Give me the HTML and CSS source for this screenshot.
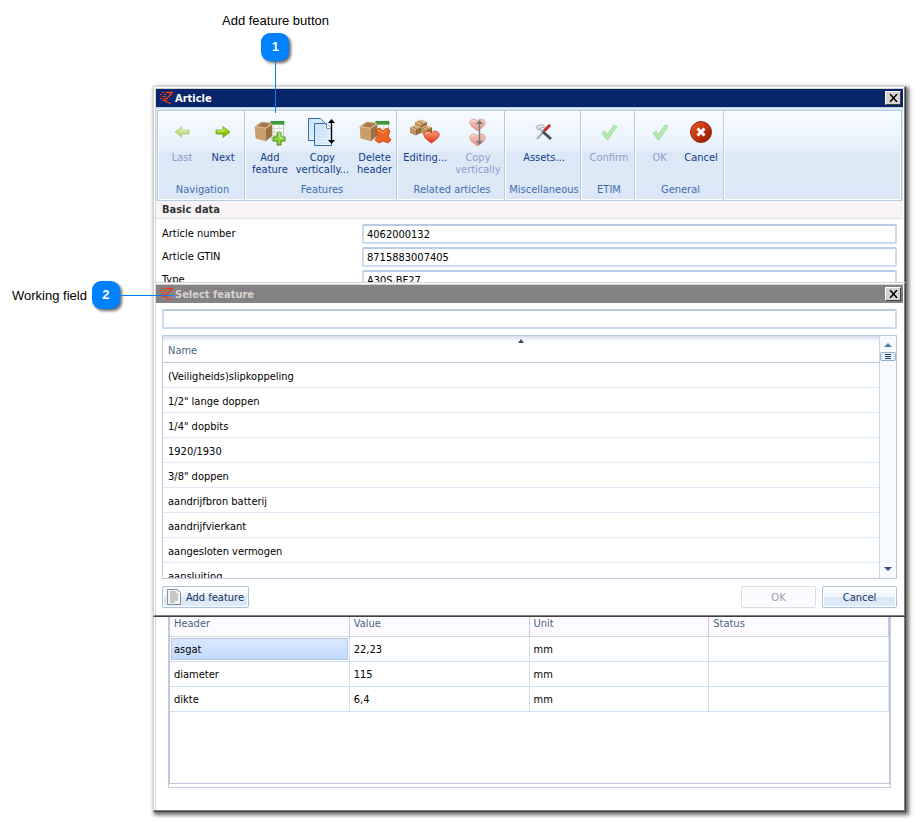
FILE: index.html
```html
<!DOCTYPE html>
<html lang="en">
<head>
<meta charset="utf-8">
<title>Article</title>
<link rel="stylesheet" href="styles.css">
</head>
<body>
<svg class="defs" width="0" height="0" aria-hidden="true">
  <defs>
    <linearGradient id="green" x1="0" y1="0" x2="0" y2="1"><stop offset="0" stop-color="#b4e61e"/><stop offset="1" stop-color="#6fae00"/></linearGradient>
    <linearGradient id="heartfill" x1="0" y1="0" x2="0" y2="1"><stop offset="0" stop-color="#ff9a78"/><stop offset="1" stop-color="#dc3214"/></linearGradient>
    <linearGradient id="redball" x1="0" y1="0" x2="1" y2="1"><stop offset="0" stop-color="#f05a1e"/><stop offset="1" stop-color="#8c1400"/></linearGradient>
    <linearGradient id="pagefill" x1="0" y1="0" x2="1" y2="1"><stop offset="0" stop-color="#c8e0fa"/><stop offset="1" stop-color="#f4faff"/></linearGradient>
    <symbol id="logo" viewBox="0 0 13 14">
      <path d="M6 1.500h6.500L6.500 8l-2 1.500L11 13" fill="none" stroke="#f03c14" stroke-width="1.400"/>
      <path d="M2 1.500h3M0 3.500h2M4 3.500h2M1 5.500h1M3 5.500h3M0 7.500h2M3 7.500h2M2 9.500h2" stroke="#f03c14"/>
    </symbol>
    <symbol id="arrow" viewBox="0 0 16 14">
      <path d="M1 5h7V1.500L15 7l-7 5.500V9H1z" fill="url(#green)" stroke="#6fa51e" stroke-width=".8"/>
      <path d="M2 6h7V4" fill="none" stroke="#dcf58c"/>
    </symbol>
    <symbol id="box" viewBox="0 0 32 28">
      <path d="M18 2h13v20H18z" fill="#fff" stroke="#b4c8b4"/>
      <path d="M17 1h15v4H17z" fill="#3c963c"/>
      <path d="M21 5v16M26 5v16M18 9h13M18 13h13M18 17h13" stroke="#c3d7c3" fill="none"/>
      <path d="M0 7l7-5 12 1-7 6z" fill="#c8a06e"/>
      <path d="M3 7l5-4 9 1-5 4z" fill="#a47a4c"/>
      <path d="M0 7l12 2v14L1 20z" fill="#c89f6b"/>
      <path d="M12 9l7-5v13l-7 6z" fill="#9b7141"/>
      <path d="M0 7l12 2 7-5" fill="none" stroke="#e1c08f"/>
    </symbol>
    <symbol id="cube" viewBox="0 0 14 13">
      <path d="M1 3l6-2.500L13 3 7 6z" fill="#d7b27c"/><path d="M4 2.500l5 2.500v2" fill="none" stroke="#a57b43"/>
      <path d="M1 3l6 3v6L1 9z" fill="#bb9258"/><path d="M13 3L7 6v6l6-3z" fill="#8f693a"/>
    </symbol>
    <symbol id="heart" viewBox="0 0 17 14">
      <path d="M8.500 13C5 10.500.8 7.700.8 4.500.8 1 6.500-.2 8.500 3c2-3.200 7.700-2 7.700 1.500C16.200 7.700 12 10.500 8.500 13z" fill="url(#heartfill)" stroke="#c8371e" stroke-width=".8"/>
      <path d="M2.500 4c.5-1.600 2.500-2 4-.8" fill="none" stroke="#ffd2be"/>
    </symbol>
    <symbol id="check" viewBox="0 0 18 18">
      <path d="M2 10l3-2 2.500 3.500L14 2l3 1.500L8 16.500H6.500z" fill="#78e05a" stroke="#5ac850"/>
    </symbol>
  </defs>
</svg>

<main class="stage">
  <section class="window" aria-label="Article">
    <header class="titlebar">
      <svg class="logo"><use href="#logo"/></svg>
      <h1>Article</h1>
      <button class="close" type="button" aria-label="Close"><svg width="9" height="8" viewBox="0 0 9 8"><path d="M1 0l7 8M8 0L1 8" stroke="#000" stroke-width="1.500"/></svg></button>
    </header>

    <div class="ribbon"><div class="ribbon-inner">
      <div class="group nav">
        <div class="tools">
          <button class="tool" type="button" disabled><span class="icon"><svg class="flip" width="16" height="14"><use href="#arrow"/></svg></span>Last</button>
          <button class="tool" type="button"><span class="icon"><svg width="16" height="14"><use href="#arrow"/></svg></span>Next</button>
        </div>
        <span class="caption">Navigation</span>
      </div>
      <div class="group features">
        <div class="tools">
          <button class="tool" type="button"><span class="icon"><svg width="34" height="30" viewBox="0 0 34 30"><use href="#box" x="0" y="3" width="33" height="26"/><path d="M21 15h4v4h4v4h-4v4h-4v-4h-4v-4h4z" transform="translate(3 1)" fill="#8cd23c" stroke="#418c1e"/><path d="M25 17h2v4h4" fill="none" stroke="#d2f5a0"/></svg></span>Add<br>feature</button>
          <button class="tool" type="button"><span class="icon"><svg width="30" height="30" viewBox="0 0 30 30"><path d="M1.500 1.500h12l4 4v18h-16z" fill="url(#pagefill)" stroke="#326eaf"/><path d="M7.500 6.500h12l5 5v17h-17z" fill="url(#pagefill)" stroke="#326eaf"/><path d="M19.500 6.500v5h5" fill="#fff" stroke="#6496c8"/><path d="M10 11h7M10 14h12M10 17h12M10 20h12M10 23h12M10 26h12" stroke="#c3dcf5"/><path d="M24.500 4v21" stroke="#000" stroke-width="1.400"/><path d="M21 6l3.500-4L28 6zM21 23l3.500 4 3.500-4z"/></svg></span>Copy<br>vertically...</button>
          <button class="tool" type="button"><span class="icon"><svg width="34" height="30" viewBox="0 0 34 30"><use href="#box" x="0" y="3" width="33" height="26"/><path d="M18 14l3-3 4 3 4-3 3 3-2 5 3 4-3 3-5-2-4 2-4-3 3-4z" fill="#f06423" stroke="#d2500f"/><path d="M20 13l5 3 4-3" fill="none" stroke="#ffaa78"/></svg></span>Delete<br>header</button>
        </div>
        <span class="caption">Features</span>
      </div>
      <div class="group related">
        <div class="tools">
          <button class="tool" type="button"><span class="icon"><svg width="32" height="28" viewBox="0 0 32 28"><use href="#cube" x="5" y="1" width="14" height="13"/><use href="#cube" x="0" y="6" width="13" height="13"/><use href="#cube" x="11" y="6" width="13" height="13"/><use href="#heart" x="14" y="12" width="17" height="14"/></svg></span>Editing...</button>
          <button class="tool" type="button" disabled><span class="icon"><svg width="20" height="30" viewBox="0 0 20 30"><use href="#heart" x="1" y="1" width="17" height="14"/><use href="#heart" x="1" y="16" width="17" height="14"/><path d="M11.500 5v20" stroke="#000" stroke-width="1.400"/><path d="M8 7l3.500-4L15 7zM8 24l3.500 4 3.500-4z"/></svg></span>Copy<br>vertically</button>
        </div>
        <span class="caption">Related articles</span>
      </div>
      <div class="group misc">
        <div class="tools">
          <button class="tool" type="button"><span class="icon"><svg width="18" height="18" viewBox="0 0 18 18"><path d="M2 16l9-10" stroke="#aaafb4" stroke-width="2"/><path d="M1 4l3-2h4l2 2-4 1-3 2zM10 7l6-6" fill="#e6e6eb" stroke="#9ba0a5" stroke-width=".8"/><path d="M7 8l9 8" stroke="#46505a" stroke-width="3"/><path d="M9 8l6-6" stroke="#be3223" stroke-width="3"/><path d="M4 5l4 4" stroke="#b4b9be" stroke-width="1.500"/></svg></span>Assets...</button>
        </div>
        <span class="caption">Miscellaneous</span>
      </div>
      <div class="group etim">
        <div class="tools">
          <button class="tool" type="button" disabled><span class="icon"><svg width="18" height="18"><use href="#check"/></svg></span>Confirm</button>
        </div>
        <span class="caption">ETIM</span>
      </div>
      <div class="group general">
        <div class="tools">
          <button class="tool" type="button" disabled><span class="icon"><svg width="18" height="18"><use href="#check"/></svg></span>OK</button>
          <button class="tool" type="button"><span class="icon"><svg width="24" height="24" viewBox="0 0 24 24"><circle cx="12" cy="12" r="10.500" fill="url(#redball)" stroke="#a02814"/><path d="M8.500 8.500l7 7M15.500 8.500l-7 7" stroke="#fff" stroke-width="3"/></svg></span>Cancel</button>
        </div>
        <span class="caption">General</span>
      </div>
    </div></div>

    <h2 class="section-title">Basic data</h2>
    <form class="fields">
      <label for="number">Article number</label><input id="number" type="text" value="4062000132">
      <label for="gtin">Article GTIN</label><input id="gtin" type="text" value="8715883007405">
      <label for="type">Type</label><input id="type" type="text" value="A30S BF27">
    </form>

    <div class="grid-box"><div class="grid-inner">
      <table class="values">
        <thead><tr><th>Header</th><th>Value</th><th>Unit</th><th>Status</th></tr></thead>
        <tbody>
          <tr><td class="selected">asgat</td><td>22,23</td><td>mm</td><td></td></tr>
          <tr><td>diameter</td><td>115</td><td>mm</td><td></td></tr>
          <tr><td>dikte</td><td>6,4</td><td>mm</td><td></td></tr>
        </tbody>
      </table>
    </div></div>

    <section class="dialog" aria-label="Select feature">
      <header class="titlebar inactive">
        <svg class="logo"><use href="#logo"/></svg>
        <h2>Select feature</h2>
        <button class="close" type="button" aria-label="Close"><svg width="9" height="8" viewBox="0 0 9 8"><path d="M1 0l7 8M8 0L1 8" stroke="#000" stroke-width="1.500"/></svg></button>
      </header>
      <div class="dialog-body">
        <input class="search" type="text" aria-label="Search feature">
        <div class="list">
          <table class="names">
            <thead><tr><th>Name<svg class="sort" width="6" height="4" viewBox="0 0 6 4"><path d="M0 4l3-4 3 4z" fill="#3c4b64"/></svg></th></tr></thead>
            <tbody>
              <tr><td>(Veiligheids)slipkoppeling</td></tr>
              <tr><td>1/2" lange doppen</td></tr>
              <tr><td>1/4" dopbits</td></tr>
              <tr><td>1920/1930</td></tr>
              <tr><td>3/8" doppen</td></tr>
              <tr><td>aandrijfbron batterij</td></tr>
              <tr><td>aandrijfvierkant</td></tr>
              <tr><td>aangesloten vermogen</td></tr>
              <tr><td>aansluiting</td></tr>
            </tbody>
          </table>
          <div class="scrollbar">
            <button type="button" aria-label="Scroll up"><svg width="8" height="4" viewBox="0 0 8 4"><path d="M0 4l4-4 4 4z" fill="#5a78a5"/></svg></button>
            <span class="thumb"></span>
            <button class="down" type="button" aria-label="Scroll down"><svg width="8" height="4" viewBox="0 0 8 4"><path d="M0 0l4 4 4-4z" fill="#325082"/></svg></button>
          </div>
        </div>
        <footer class="actions">
          <button class="btn add" type="button"><svg width="14" height="16" viewBox="0 0 14 16"><path d="M.5.500h10l3 3v12H.5z" fill="#f5f5f5" stroke="#8c8c8c"/><path d="M3 3h6M3 5h8M3 7h8M3 9h8M3 11h8M3 13h5" stroke="#b9b9b9" stroke-width="1.600"/></svg>Add feature</button>
          <button class="btn ok" type="button" disabled>OK</button>
          <button class="btn" type="button">Cancel</button>
        </footer>
      </div>
    </section>
  </section>

  <div class="callout first"><span>Add feature button</span><b>1</b><i></i></div>
  <div class="callout second"><span>Working field</span><b>2</b><i></i></div>
</main>
</body>
</html>
```
FILE: styles.css
```css
* { box-sizing: border-box; }
body {
  margin: 0;
  background: #fff;
  color: #000;
  font: 11px/13px "DejaVu Sans Condensed", "DejaVu Sans", sans-serif;
}
.defs { position: absolute; }
h1, h2 { margin: 0; font-size: 11px; line-height: 13px; }
button, input { font: inherit; color: inherit; margin: 0; }
svg { display: block; flex: none; }

.stage { position: relative; padding: 86px 13px 10px 153px; }

.window, .dialog {
  background: #fff;
  border: 1px solid #d6d3ce;
  border-right-color: #404040;
  border-bottom-color: #404040;
}
.window {
  position: relative;
  padding: 2px 2px 2px 2px;
  box-shadow: 2px 2px 4px 1px rgba(0, 0, 0, .6), inset -1px -1px #808080, inset 1px 1px #fff, inset 2px 2px #d6d3ce;
}

.titlebar {
  display: flex;
  align-items: center;
  height: 18px;
  padding: 0 2px 0 4px;
  background: #08246b;
  color: #fff;
}
.titlebar.inactive { background: #848284; color: #d6d3ce; }
.titlebar h1, .titlebar h2 { flex: 1; font-weight: bold; }
.logo { width: 13px; height: 14px; margin-right: 2px; }
.close {
  display: grid;
  place-items: center;
  width: 16px;
  height: 14px;
  padding: 0;
  background: #d6d3ce;
  border: 1px solid;
  border-color: #fff #404040 #404040 #fff;
}

.ribbon { padding: 2px 1px 0; background: #dce8f6; border-top: 1px solid #bed6e6; }
.ribbon-inner {
  display: flex;
  height: 91px;
  border: 1px solid #b5cbde;
  background: linear-gradient(#f8fcff 0, #e6effc 40px, #dce8f5 41px, #dde9f6 70px, #dce6f8 100%);
  box-shadow: inset 0 0 0 1px #fff;
}
.group {
  display: flex;
  flex-direction: column;
  justify-content: space-between;
  padding: 6px 0 4px 3px;
  border-right: 1px solid #b5cbde;
  box-shadow: 1px 0 #fff;
}
.nav { width: 87px; }
.features { width: 152px; }
.related { width: 108px; }
.misc { width: 76px; }
.etim { width: 54px; }
.general { width: 89px; }
.tools { display: flex; justify-content: center; align-items: flex-start; gap: 8px; }
.tool {
  min-width: 33px;
  padding: 0;
  background: none;
  border: 0;
  color: #103c8c;
  line-height: 12px;
  text-align: center;
}
.tool:disabled { color: #8ca0cd; }
.tool:disabled .icon { opacity: .5; }
.icon { display: grid; place-items: center; height: 30px; margin-bottom: 5px; }
.flip { transform: scaleX(-1); }
.caption { color: #3c6eaf; text-align: center; line-height: 12px; white-space: nowrap; }

.section-title {
  padding: 2px 6px;
  height: 18px;
  background: #f7f3f7;
  border-bottom: 1px solid #e4e0e4;
  color: #333;
}
.fields {
  display: grid;
  grid-template-columns: 200px 1fr;
  row-gap: 3px;
  padding: 5px 6px 0 6px;
}
.fields label { padding-top: 3px; }
.fields input, .search {
  width: 100%;
  height: 20px;
  padding: 0 3px;
  background: #fff;
  border: 2px solid #cedbef;
  border-top-color: #b8cce4;
  border-radius: 2px;
  outline: 0;
}

.grid-box {
  margin: 319px 12px 21px;
  border: 1px solid #c0cbe2;
  padding: 0 0 3px;
}
.grid-inner {
  height: 174px;
  border: 1px solid #c0c6de;
  border-top: 0;
}
table { width: 100%; border-collapse: separate; border-spacing: 0; table-layout: fixed; }
th, td { padding: 0 5px; text-align: left; font-weight: normal; }
th { color: #4a6484; }
.values th, .values td { padding: 0 4px; }
.values th {
  height: 27px;
  background: #fdfbff;
  border-right: 1px solid #c6cbe0;
  border-bottom: 1px solid #cedbe9;
}
.values td { height: 25px; border-right: 1px solid #cfe2f5; border-bottom: 1px solid #cfe2f5; }
.values .selected {
  background: linear-gradient(#deeaff, #c0d9fc);
  box-shadow: inset 0 0 0 1px #fff, inset 0 0 0 2px #b3c8e3;
}

.dialog {
  position: absolute;
  top: 195px;
  left: -1px;
  right: -1px;
  padding: 2px 2px 0;
  border-left-color: #d6d3ce;
  box-shadow: inset -1px -1px #808080, inset 1px 1px #fff, inset 2px 2px #d6d3ce;
}
.dialog-body { padding: 6px 6px 8px; }
.search { display: block; }
.list {
  display: flex;
  height: 244px;
  margin: 6px 0 7px;
  overflow: hidden;
  border: 1px solid #bdc8df;
}
.names th {
  height: 27px;
  padding-top: 3px;
  border-bottom: 1px solid #bdc8df;
  background: linear-gradient(#d8deee, #fff 6px);
  position: relative;
}
.sort { position: absolute; top: 3px; left: 50%; margin-left: -3px; }
.names td { height: 25px; border-bottom: 1px solid #dfeaf8; padding-top: 2px; }
.scrollbar {
  display: flex;
  flex-direction: column;
  flex: none;
  width: 17px;
  padding: 2px 0;
  background: #f7fbff;
  border-left: 1px solid #c6d5e8;
}
.scrollbar button {
  display: grid;
  place-items: center;
  width: 100%;
  height: 14px;
  padding: 0;
  background: none;
  border: 0;
}
.scrollbar .down { margin-top: auto; }
.thumb {
  height: 9px;
  padding: 1px 4px;
  border: 1px solid #92aed0;
  border-radius: 2px;
  background: repeating-linear-gradient(#213c6b 0 1px, #e6effa 1px 2px) content-box, #e6effa;
}
.actions { display: flex; gap: 6px; }
.btn {
  display: flex;
  align-items: center;
  justify-content: center;
  width: 75px;
  height: 22px;
  padding: 0;
  border: 1px solid #a9c4e2;
  border-radius: 2px;
  background: linear-gradient(#fff, #eef3ff 50%, #dae7f5 51%, #dfebfa);
  box-shadow: inset 0 0 0 1px #fff;
  color: #13335f;
}
.btn.add { width: 87px; margin-right: auto; gap: 5px; }
.btn:disabled { background: #fdfaff; border-color: #dcdbe0; color: #94a0b0; }

.callout {
  position: absolute;
  display: flex;
  align-items: center;
  font: 13px/15px "Liberation Sans", Arial, sans-serif;
  white-space: nowrap;
}
.callout b {
  width: 28px;
  height: 28px;
  background: #0082ff;
  border-radius: 9px;
  box-shadow: 2px 2px 3px rgba(0, 0, 0, .6);
  color: #fff;
  line-height: 28px;
  text-align: center;
}
.callout i { background: #0082ff; }
.first { top: 13px; left: 222px; flex-direction: column; }
.first b { margin-top: 5px; }
.first i { width: 1px; height: 52px; }
.second { top: 281px; left: 12px; }
.second b { margin-left: 5px; }
.second i { width: 53px; height: 1px; }
```
